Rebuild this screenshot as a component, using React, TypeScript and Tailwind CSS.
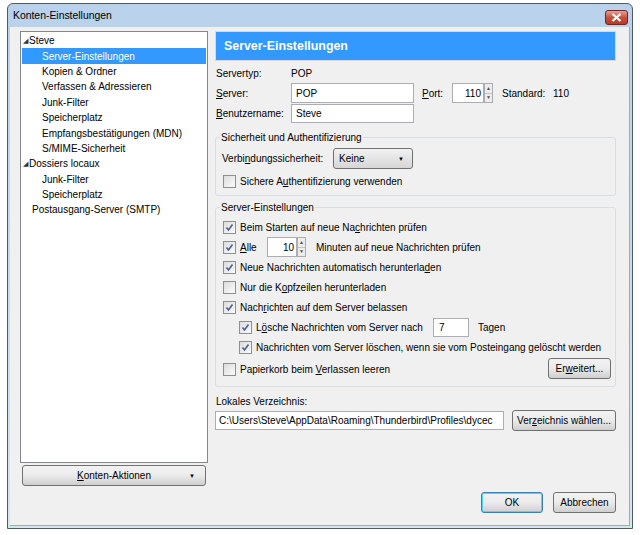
import type { JSX, ReactNode } from "react";

const FONT = { fontFamily: '"Liberation Sans", Arial, sans-serif' };

function Check({ checked }: { checked?: boolean }): JSX.Element {
  return (
    <span className="flex h-[13px] w-[13px] shrink-0 items-center justify-center border border-[#8e8f8f] bg-gradient-to-br from-[#dcdcdc] to-[#fbfbfb]">
      {checked ? (
        <svg width="9" height="9" viewBox="0 0 9 9">
          <path d="M1.5 4.5 L3.5 7 L7.5 1.5" fill="none" stroke="#4a5f97" strokeWidth="1.6" />
        </svg>
      ) : null}
    </span>
  );
}

function CheckRow({
  checked,
  indent,
  children,
}: {
  checked?: boolean;
  indent?: boolean;
  children: ReactNode;
}): JSX.Element {
  return (
    <div className={`flex h-[20px] items-center gap-[4px] ${indent ? "pl-[17px]" : "pl-[1px]"}`}>
      <Check checked={checked} />
      <span className="whitespace-nowrap">{children}</span>
    </div>
  );
}

function Spinner(): JSX.Element {
  return (
    <span className="flex h-[20px] w-[9px] flex-col border border-[#abadb3] bg-[#ececec]">
      <span className="flex flex-1 items-center justify-center border-b border-[#c4c4c4] text-[5px] leading-none text-[#4d4d4d]">▲</span>
      <span className="flex flex-1 items-center justify-center text-[5px] leading-none text-[#4d4d4d]">▼</span>
    </span>
  );
}

function Btn({
  children,
  className = "",
  focus,
}: {
  children: ReactNode;
  className?: string;
  focus?: boolean;
}): JSX.Element {
  return (
    <button
      type="button"
      className={`flex h-[21px] items-center justify-center whitespace-nowrap rounded-[3px] border ${
        focus ? "border-[#3c7fb1] shadow-[inset_0_0_0_1px_#48d8fb]" : "border-[#707070]"
      } bg-gradient-to-b from-[#f2f2f2] via-[#ebebeb] to-[#cfcfcf] text-[10px] text-black ${className}`}
    >
      {children}
    </button>
  );
}

const tree: { label: string; level: number; arrow?: boolean; selected?: boolean }[] = [
  { label: "Steve", level: 0, arrow: true },
  { label: "Server-Einstellungen", level: 1, selected: true },
  { label: "Kopien & Ordner", level: 1 },
  { label: "Verfassen & Adressieren", level: 1 },
  { label: "Junk-Filter", level: 1 },
  { label: "Speicherplatz", level: 1 },
  { label: "Empfangsbestätigungen (MDN)", level: 1 },
  { label: "S/MIME-Sicherheit", level: 1 },
  { label: "Dossiers locaux", level: 0, arrow: true },
  { label: "Junk-Filter", level: 1 },
  { label: "Speicherplatz", level: 1 },
  { label: "Postausgang-Server (SMTP)", level: 0 },
];

export default function App(): JSX.Element {
  return (
    <div className="h-[535px] w-[640px] overflow-hidden bg-white pl-[7px] pt-[3px] text-[10px] text-black" style={FONT}>
      <div className="flex h-[526px] w-[626px] flex-col rounded-t-[6px] border border-[#4f5a66] bg-gradient-to-b from-[#b9d1ea] to-[#d6e5f4]">
        {/* title bar */}
        <div className="flex h-[23px] shrink-0 items-center justify-between pl-[5px] pr-[4px]">
          <span className="text-[10.4px] text-black">Konten-Einstellungen</span>
          <span className="mt-[4px] flex h-[15px] w-[23px] items-center justify-center rounded-[3px] border border-[#6d2a22] bg-gradient-to-b from-[#e8a093] via-[#c9503c] to-[#b9382a]">
            <svg width="11" height="9" viewBox="0 0 11 9">
              <path d="M1.5 1 L9.5 8 M9.5 1 L1.5 8" stroke="white" strokeWidth="2.2" />
            </svg>
          </span>
        </div>
        {/* client */}
        <div className="mx-[2px] mb-[2px] flex flex-1 border-b border-r border-[#3fd0f0] bg-[#f0f0f0] pl-[10px] pr-[14px] pt-[4px]">
          {/* left column */}
          <div className="flex w-[188px] shrink-0 flex-col">
            <div className="h-[432px] border border-[#828790] bg-white">
              <div className="px-[1px] pt-[1px]">
                {tree.map((t, i) => (
                  <div
                    key={i}
                    className={`flex h-[15.4px] items-center whitespace-nowrap ${t.selected ? "bg-[#3399ff] text-white" : ""}`}
                    style={{ paddingLeft: t.level === 0 ? 1 : 20 }}
                  >
                    {t.arrow ? (
                      <span className="mr-[1px] text-[7px] leading-none text-[#333]">◢</span>
                    ) : t.level === 0 ? (
                      <span className="w-[9px]" />
                    ) : null}
                    <span>{t.label}</span>
                  </div>
                ))}
              </div>
            </div>
            <Btn className="relative mt-[2px] ml-[2px] w-[184px]">
              <span>
                <span className="underline">K</span>onten-Aktionen
              </span>
              <span className="absolute right-[10px] top-[7px] text-[6px] leading-none">▼</span>
            </Btn>
          </div>

          {/* right column */}
          <div className="ml-[7px] flex w-[401px] flex-col">
            <div className="flex h-[30px] items-center border border-[#d9d9d9] bg-[#3399ff] pl-[8px] text-[12.4px] font-bold text-white">
              Server-Einstellungen
            </div>

            <div className="mt-[4px] flex h-[16px] items-center">
              <span className="w-[76px] pl-[1px]">Servertyp:</span>
              <span>POP</span>
            </div>
            <div className="mt-[2px] flex h-[20px] items-center">
              <span className="w-[76px] pl-[1px]">
                <span className="underline">S</span>erver:
              </span>
              <span className="flex h-[20px] w-[123px] items-center border border-[#abadb3] bg-white pl-[4px]">POP</span>
              <span className="ml-[8px] w-[30px]">
                <span className="underline">P</span>ort:
              </span>
              <span className="flex h-[20px] w-[32px] items-center justify-end border border-[#abadb3] bg-white pr-[2px]">110</span>
              <Spinner />
              <span className="ml-[9px] w-[51px]">Standard:</span>
              <span>110</span>
            </div>
            <div className="mt-[1px] flex h-[19px] items-center">
              <span className="w-[76px] pl-[1px]">
                <span className="underline">B</span>enutzername:
              </span>
              <span className="flex h-[19px] w-[123px] items-center border border-[#abadb3] bg-white pl-[4px]">Steve</span>
            </div>

            <fieldset className="mt-[7px] rounded-[3px] border border-[#d5dfe5] px-[6px] pb-[4px]">
              <legend className="ml-[-2px] px-[1px] leading-[15px]">Sicherheit und Authentifizierung</legend>
              <div className="mt-[3px] flex h-[21px] items-center">
                <span className="w-[111px]">
                  Verbi<span className="underline">n</span>dungssicherheit:
                </span>
                <span className="relative flex h-[21px] w-[80px] items-center rounded-[3px] border border-[#707070] bg-gradient-to-b from-[#f2f2f2] to-[#d6d6d6] pl-[5px]">
                  Keine
                  <span className="absolute right-[8px] top-[7px] text-[6px] leading-none">▼</span>
                </span>
              </div>
              <div className="mt-[2px]">
                <CheckRow>
                  Sichere A<span className="underline">u</span>thentifizierung verwenden
                </CheckRow>
              </div>
            </fieldset>

            <fieldset className="mt-[4px] rounded-[3px] border border-[#d5dfe5] pb-[4px] pl-[6px] pr-[4px]">
              <legend className="ml-[-2px] px-[1px] leading-[15px]">Server-Einstellungen</legend>
              <div className="mt-[2px]">
                <CheckRow checked>
                  Beim Starten auf neue Na<span className="underline">c</span>hrichten prüfen
                </CheckRow>
                <div className="flex h-[20px] items-center gap-[4px] pl-[1px]">
                  <Check checked />
                  <span className="w-[23px]">
                    <span className="underline">A</span>lle
                  </span>
                  <span className="flex items-center">
                    <span className="flex h-[20px] w-[30px] items-center justify-end border border-[#abadb3] bg-white pr-[2px]">10</span>
                    <Spinner />
                  </span>
                  <span className="ml-[6px] whitespace-nowrap">Minuten auf neue Nachrichten prüfen</span>
                </div>
                <CheckRow checked>
                  Neue Nachrichten automatisch herunterla<span className="underline">d</span>en
                </CheckRow>
                <CheckRow>
                  Nur die K<span className="underline">o</span>pfzeilen herunterladen
                </CheckRow>
                <CheckRow checked>
                  Nach<span className="underline">r</span>ichten auf dem Server belassen
                </CheckRow>
                <div className="flex h-[20px] items-center gap-[4px] pl-[17px]">
                  <Check checked />
                  <span className="w-[173px] whitespace-nowrap">
                    L<span className="underline">ö</span>sche Nachrichten vom Server nach
                  </span>
                  <span className="flex h-[19px] w-[36px] items-center border border-[#abadb3] bg-white pl-[5px]">7</span>
                  <span className="ml-[5px]">Tagen</span>
                </div>
                <CheckRow checked indent>
                  Nachrichten vom Server löschen, wenn sie vom Posteingang gelöscht werden
                </CheckRow>
                <div className="flex h-[25px] items-center justify-between">
                  <div className="flex items-center gap-[4px] pl-[1px]">
                    <Check />
                    <span className="whitespace-nowrap">
                      Papierkorb beim <span className="underline">V</span>erlassen leeren
                    </span>
                  </div>
                  <Btn className="mb-[2px] w-[63px]">
                    <span>
                      Er<span className="underline">w</span>eitert...
                    </span>
                  </Btn>
                </div>
              </div>
            </fieldset>

            <div className="mt-[6px] flex h-[16px] items-center pl-[1px]">Lokales Verzeichnis:</div>
            <div className="mt-[1px] flex items-center">
              <span className="flex h-[19px] w-[289px] items-center overflow-hidden whitespace-nowrap border border-[#abadb3] bg-white pl-[3px]">
                C:\Users\Steve\AppData\Roaming\Thunderbird\Profiles\dycec
              </span>
              <Btn className="ml-[8px] w-[104px]">
                <span>
                  Ver<span className="underline">z</span>eichnis wählen...
                </span>
              </Btn>
            </div>

            <div className="mt-[61px] flex justify-end gap-[10px]">
              <Btn focus className="w-[62px]">OK</Btn>
              <Btn className="w-[63px]">Abbrechen</Btn>
            </div>
          </div>
        </div>
      </div>
    </div>
  );
}
